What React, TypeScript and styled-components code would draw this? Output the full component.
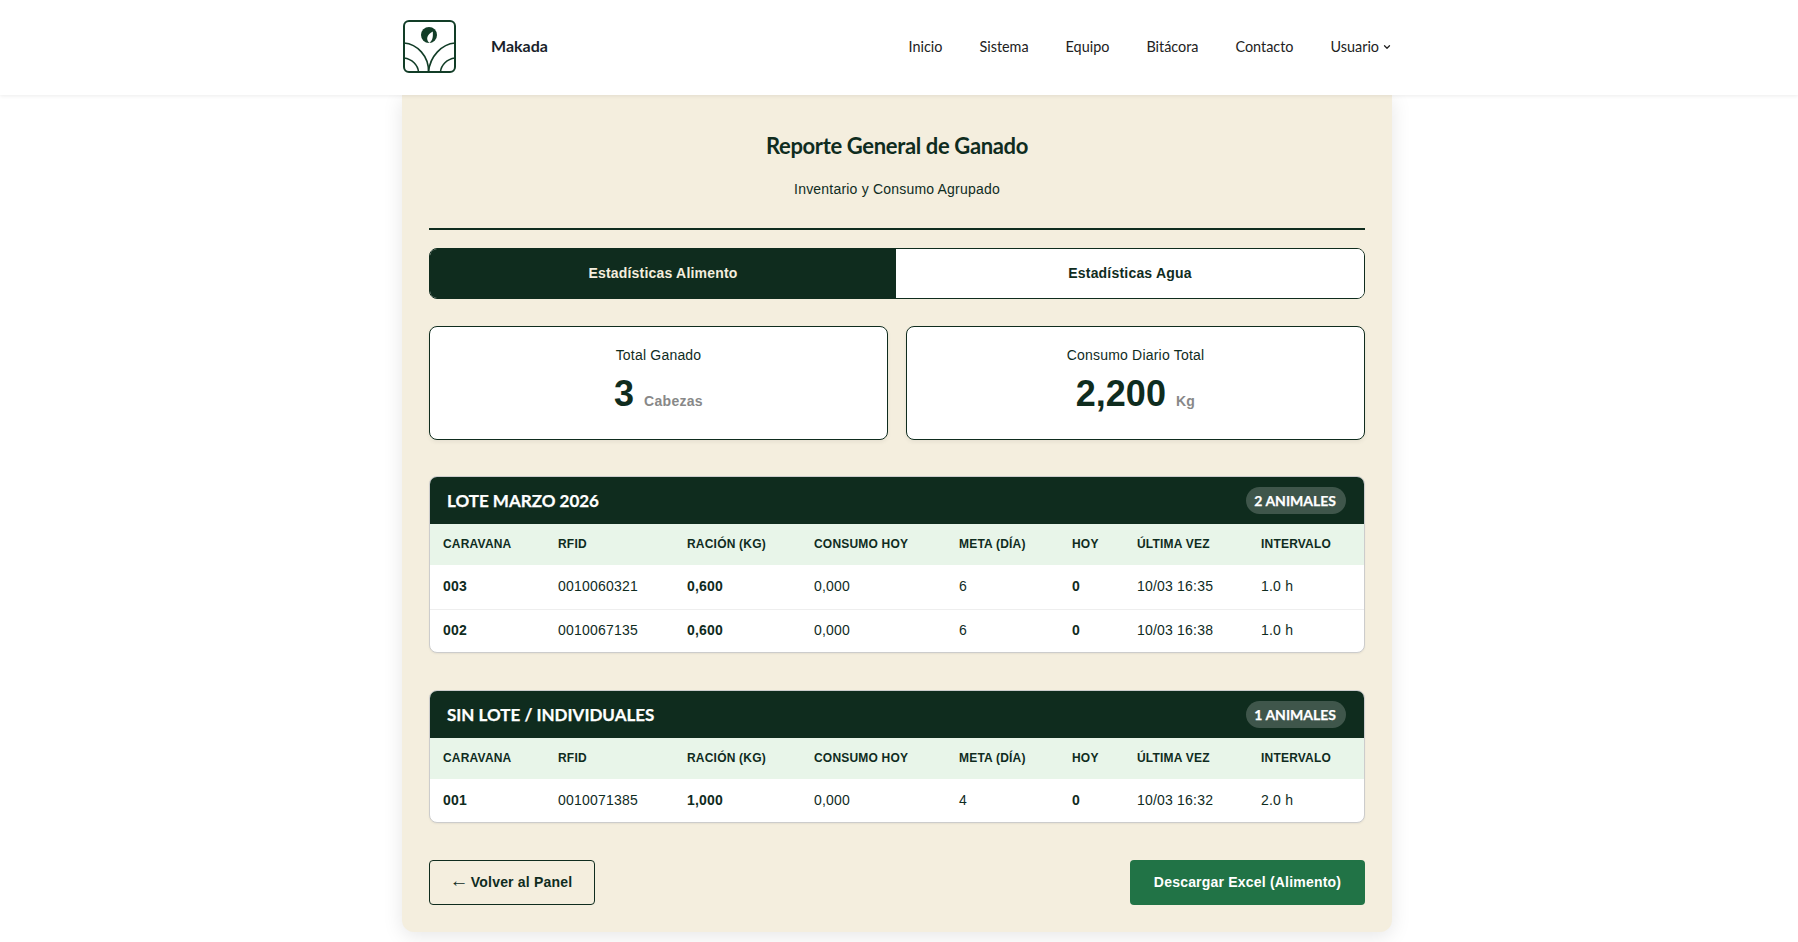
import styled, { createGlobalStyle } from 'styled-components';
import { ChevronDown } from 'lucide-react';

const dark = '#0f2c1e';
const cream = '#f4eede';

const GlobalStyle = createGlobalStyle`
  html, body {
    margin: 0;
    height: 942px;
    overflow: hidden;
    background: #ffffff;
    font-family: 'Liberation Sans', Arial, sans-serif;
    letter-spacing: 0.2px;
    color: ${dark};
  }
`;

const TopBar = styled.header`
  height: 95px;
  padding-right: 4px;
  background: #ffffff;
  box-shadow: 0 1px 4px rgba(0, 0, 0, 0.08);
  position: relative;
  z-index: 2;
`;

const TopInner = styled.div`
  box-sizing: border-box;
  width: 990px;
  height: 100%;
  margin: 0 auto;
  padding: 0 0 2px 1px;
  display: flex;
  align-items: center;
  justify-content: space-between;
`;

const Brand = styled.a`
  display: flex;
  align-items: center;
  gap: 35px;
  font-family: Lato, sans-serif;
  font-weight: 700;
  font-size: 16px;
  letter-spacing: 0;
  color: #1a1f2b;
`;

const BrandName = styled.span`
  padding-bottom: 2px;
`;

const Nav = styled.nav`
  display: flex;
  align-items: center;
  gap: 37px;
  font-family: Lato, sans-serif;
  font-size: 14.4px;
  letter-spacing: 0;
  color: #222222;
`;

const NavItem = styled.a`
  display: flex;
  align-items: center;
  gap: 3px;
`;

const Content = styled.div`
  padding-right: 4px;
`;

const Sheet = styled.main`
  box-sizing: border-box;
  width: 990px;
  height: 837px;
  margin: 0 auto;
  padding: 0 27px 27px;
  background: ${cream};
  border-radius: 0 0 12px 12px;
  box-shadow: 0 4px 20px rgba(0, 0, 0, 0.1);
`;

const Intro = styled.div`
  height: 135px;
  box-sizing: border-box;
  padding-top: 36px;
  border-bottom: 2px solid ${dark};
  text-align: center;
`;

const Title = styled.h1`
  margin: 0;
  font-family: Lato, sans-serif;
  font-size: 22px;
  line-height: 30px;
  font-weight: 700;
  letter-spacing: -0.35px;
  color: ${dark};
`;

const Subtitle = styled.p`
  margin: 20px 0 0;
  font-size: 14px;
  line-height: 16px;
`;

const Tabs = styled.div`
  display: flex;
  margin-top: 18px;
  height: 51px;
  box-sizing: border-box;
  border: 1px solid ${dark};
  border-radius: 8px;
  overflow: hidden;
  background: #ffffff;
`;

const Tab = styled.button<{ $active?: boolean }>`
  flex: ${(p) => (p.$active ? '0 0 466px' : '1')};
  border: 0;
  padding: 0 0 2px;
  font-family: inherit;
  font-size: 14px;
  font-weight: 700;
  letter-spacing: 0.2px;
  background: ${(p) => (p.$active ? dark : '#ffffff')};
  color: ${(p) => (p.$active ? cream : dark)};
`;

const Stats = styled.div`
  display: grid;
  grid-template-columns: 1fr 1fr;
  gap: 18px;
  margin-top: 27px;
`;

const StatCard = styled.div`
  height: 114px;
  box-sizing: border-box;
  padding-top: 20px;
  background: #ffffff;
  border: 1px solid ${dark};
  border-radius: 8px;
  text-align: center;
  box-shadow: 0 2px 4px rgba(0, 0, 0, 0.06);
`;

const StatLabel = styled.div`
  font-size: 14px;
  line-height: 16px;
`;

const StatValue = styled.div`
  margin-top: 10px;
  font-size: 36px;
  line-height: 42px;
  font-weight: 700;
  letter-spacing: 0;
`;

const StatUnit = styled.span`
  font-size: 14px;
  letter-spacing: 0.3px;
  color: #888888;
`;

const Lot = styled.section`
  margin-top: 37px;
  background: #ffffff;
  border: 1px solid #cccccc;
  border-radius: 8px;
  overflow: hidden;
  box-shadow: 0 1px 2px rgba(0, 0, 0, 0.06);
  &:first-of-type {
    margin-top: 36px;
  }
`;

const LotHead = styled.div`
  height: 47px;
  box-sizing: border-box;
  padding: 0 18px 0 17px;
  display: flex;
  align-items: center;
  justify-content: space-between;
  background: ${dark};
  color: #ffffff;
  font-family: Lato, sans-serif;
  font-weight: 700;
  letter-spacing: 0;
  -webkit-text-stroke: 0.25px #ffffff;
`;

const LotName = styled.h2`
  margin: 0;
  font-size: 17px;
  font-weight: 700;
`;

const Badge = styled.span`
  padding: 3px 10px 3px 8px;
  height: 21px;
  line-height: 21px;
  border-radius: 14px;
  background: rgba(255, 255, 255, 0.2);
  font-size: 14px;
`;

const Table = styled.table`
  width: 100%;
  table-layout: fixed;
  border-collapse: collapse;
`;

const Col = styled.col<{ $w: number }>`
  width: ${(p) => p.$w}px;
`;

const Th = styled.th`
  height: 41px;
  padding: 0 14px 2px 13px;
  box-sizing: border-box;
  background: #e8f5e9;
  text-align: left;
  font-size: 12px;
  font-weight: 700;
  letter-spacing: 0.2px;
  white-space: nowrap;
`;

const Row = styled.tr`
  &:not(:last-child) td {
    height: 44px;
    border-bottom: 1px solid #eeeeee;
  }
`;

const Td = styled.td<{ $bold?: boolean }>`
  height: 43px;
  padding: 0 14px 2px 13px;
  box-sizing: border-box;
  font-size: 14px;
  font-weight: ${(p) => (p.$bold ? 700 : 400)};
  white-space: nowrap;
`;

const Actions = styled.div`
  display: flex;
  justify-content: space-between;
  margin-top: 37px;
`;

const BackButton = styled.a`
  box-sizing: border-box;
  width: 166px;
  height: 45px;
  padding: 0 2px 2px 0;
  display: flex;
  align-items: center;
  justify-content: center;
  gap: 2px;
  border: 1px solid ${dark};
  border-radius: 4px;
  font-size: 14px;
  font-weight: 700;
`;

const Arrow = styled.span`
  padding-bottom: 3px;
  font-size: 19px;
  line-height: 1;
  font-weight: 400;
`;

const ExportButton = styled.a`
  box-sizing: border-box;
  width: 235px;
  height: 45px;
  padding-bottom: 2px;
  display: flex;
  align-items: center;
  justify-content: center;
  border-radius: 4px;
  background: #217346;
  color: #ffffff;
  font-size: 14px;
  font-weight: 700;
`;

const columns = [115, 129, 127, 145, 113, 65, 124, 118];
const headers = ['Caravana', 'RFID', 'Ración (kg)', 'Consumo hoy', 'Meta (día)', 'Hoy', 'Última vez', 'Intervalo'];

const lots = [
  {
    name: 'LOTE MARZO 2026',
    count: '2 ANIMALES',
    rows: [
      ['003', '0010060321', '0,600', '0,000', '6', '0', '10/03 16:35', '1.0 h'],
      ['002', '0010067135', '0,600', '0,000', '6', '0', '10/03 16:38', '1.0 h'],
    ],
  },
  {
    name: 'SIN LOTE / INDIVIDUALES',
    count: '1 ANIMALES',
    rows: [['001', '0010071385', '1,000', '0,000', '4', '0', '10/03 16:32', '2.0 h']],
  },
];

const boldColumns = [0, 2, 5];

function Logo() {
  return (
    <svg width="53" height="53" viewBox="0 0 53 53" fill="none" stroke="#123d27" strokeWidth="1.6">
      <rect x="1" y="1" width="51" height="51" rx="5" strokeWidth="2" />
      <circle cx="26" cy="15" r="8" fill="#123d27" stroke="none" />
      <path d="M26.300 23C22.500 19 24 14.500 29.800 11.500 30 16 30.300 20 26.300 23z" fill="#ffffff" stroke="none" />
      <path d="M1 23C14 24 26 36 25.500 52" />
      <path d="M52 23C39 24 27 36 25.500 52" />
      <path d="M1 38C9 39 15 45 15.500 52" />
      <path d="M52 38C44 39 38 45 37.500 52" />
    </svg>
  );
}

export default function App() {
  return (
    <>
      <GlobalStyle />
      <TopBar>
        <TopInner>
          <Brand>
            <Logo />
            <BrandName>Makada</BrandName>
          </Brand>
          <Nav>
            <NavItem>Inicio</NavItem>
            <NavItem>Sistema</NavItem>
            <NavItem>Equipo</NavItem>
            <NavItem>Bitácora</NavItem>
            <NavItem>Contacto</NavItem>
            <NavItem>
              Usuario <ChevronDown size={10} strokeWidth={3} />
            </NavItem>
          </Nav>
        </TopInner>
      </TopBar>
      <Content>
        <Sheet>
          <Intro>
            <Title>Reporte General de Ganado</Title>
            <Subtitle>Inventario y Consumo Agrupado</Subtitle>
          </Intro>
          <Tabs>
            <Tab $active>Estadísticas Alimento</Tab>
            <Tab>Estadísticas Agua</Tab>
          </Tabs>
          <Stats>
            <StatCard>
              <StatLabel>Total Ganado</StatLabel>
              <StatValue>
                3 <StatUnit>Cabezas</StatUnit>
              </StatValue>
            </StatCard>
            <StatCard>
              <StatLabel>Consumo Diario Total</StatLabel>
              <StatValue>
                2,200 <StatUnit>Kg</StatUnit>
              </StatValue>
            </StatCard>
          </Stats>
          {lots.map((lot) => (
            <Lot key={lot.name}>
              <LotHead>
                <LotName>{lot.name}</LotName>
                <Badge>{lot.count}</Badge>
              </LotHead>
              <Table>
                <colgroup>
                  {columns.map((w, i) => (
                    <Col key={i} $w={w} />
                  ))}
                </colgroup>
                <thead>
                  <tr>
                    {headers.map((h) => (
                      <Th key={h}>{h.toUpperCase()}</Th>
                    ))}
                  </tr>
                </thead>
                <tbody>
                  {lot.rows.map((row) => (
                    <Row key={row[0]}>
                      {row.map((cell, i) => (
                        <Td key={i} $bold={boldColumns.includes(i)}>
                          {cell}
                        </Td>
                      ))}
                    </Row>
                  ))}
                </tbody>
              </Table>
            </Lot>
          ))}
          <Actions>
            <BackButton>
              <Arrow>←</Arrow> Volver al Panel
            </BackButton>
            <ExportButton>Descargar Excel (Alimento)</ExportButton>
          </Actions>
        </Sheet>
      </Content>
    </>
  );
}
